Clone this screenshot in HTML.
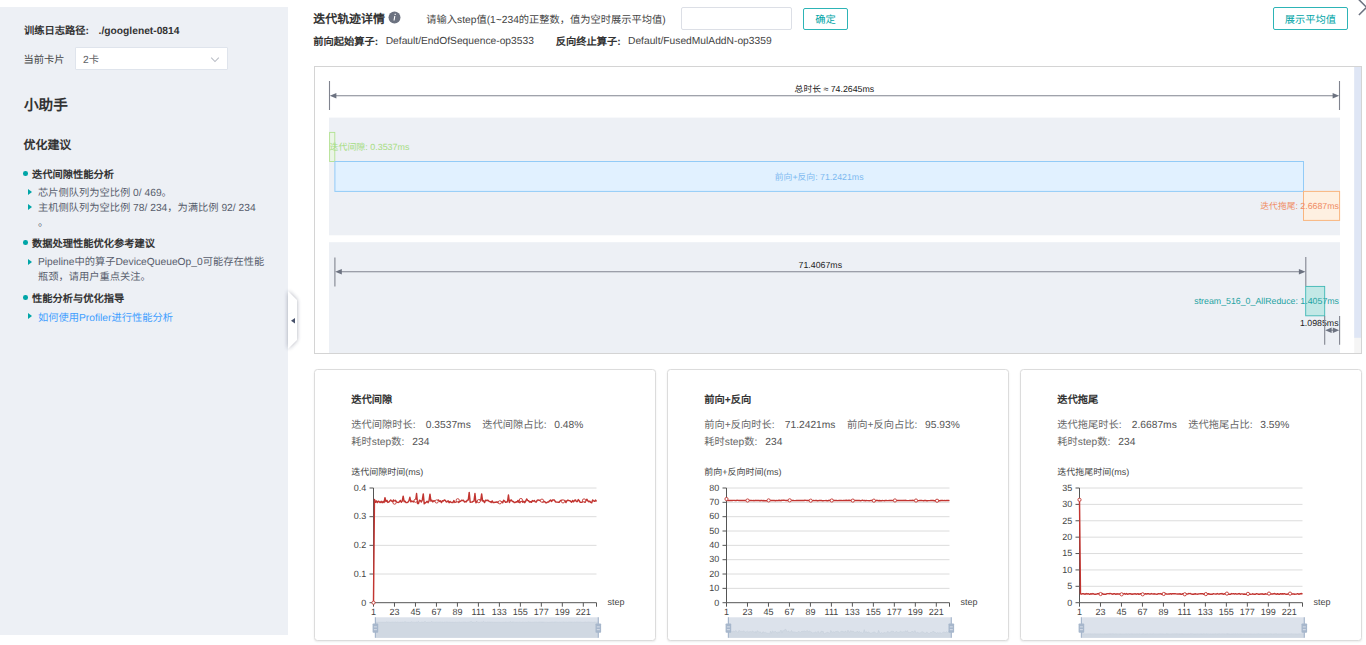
<!DOCTYPE html>
<html lang="zh-CN">
<head>
<meta charset="utf-8">
<title>Profiler</title>
<style>
html,body{margin:0;padding:0;}
body{width:1366px;height:645px;overflow:hidden;background:#fff;position:relative;font-family:"Liberation Sans", sans-serif;font-size:10.25px;color:#333;text-rendering:geometricPrecision;}
.abs{position:absolute;white-space:nowrap;}
#left{position:absolute;left:0;top:7px;width:288px;height:628px;background:#edf0f5;}
.t{position:absolute;white-space:nowrap;line-height:14px;}
.b{font-weight:bold;color:#333;}
.r{color:#575d6c;font-size:10.25px;}
.dot{position:absolute;width:4.6px;height:4.6px;border-radius:50%;background:#00a5a7;}
.tri{position:absolute;width:0;height:0;border-left:4.2px solid #00a5a7;border-top:3.2px solid transparent;border-bottom:3.2px solid transparent;}
#sel{position:absolute;left:75.2px;top:40.2px;width:152.6px;height:23.2px;background:#fff;border:1px solid #dfe4ec;box-sizing:border-box;border-radius:1px;}
.card{position:absolute;top:368.5px;width:342px;height:272.6px;border:1px solid #dcdcdc;border-radius:3.5px;box-sizing:border-box;background:#fff;box-shadow:0 1px 2px rgba(0,0,0,0.08);}
.card .ctitle{position:absolute;left:36.3px;top:24.5px;font-weight:bold;font-size:10.25px;line-height:14px;color:#333;white-space:nowrap;}
.card .cline{position:absolute;left:36.3px;font-size:10.25px;line-height:14px;color:#666;white-space:nowrap;}
.card .l1{top:49.9px;}
.card .l2{top:66.1px;}
.card .lab{margin-right:6.9px;}
.card .val{margin-right:11.5px;color:#555;}
.card .charttitle{position:absolute;left:36.3px;top:96.8px;font-size:9px;line-height:12px;color:#444;white-space:nowrap;}
.card svg.chart{position:absolute;left:-1px;top:-0.5px;}
svg text.ax{font-family:"Liberation Sans", sans-serif;font-size:9px;fill:#444;}
#tl{position:absolute;left:314px;top:66px;width:1048px;height:288px;border:1px solid #d4d4d4;box-sizing:border-box;overflow:hidden;background:#fff;}
svg text{font-family:"Liberation Sans", sans-serif;}
.btn{position:absolute;box-sizing:border-box;border:1px solid #2db4b6;border-radius:2px;color:#00a5a7;text-align:center;font-size:10.25px;background:#fff;}
</style>
</head>
<body>
<div id="left">
  <div class="t b" style="left:24px;top:17.5px;font-size:10.25px;">训练日志路径:</div>
  <div class="t b" style="left:98.6px;top:17.5px;font-size:10.25px;">./googlenet-0814</div>
  <div class="t r" style="left:23.5px;top:46.9px;font-size:10.25px;color:#444;">当前卡片</div>
  <div id="sel">
    <div class="t" style="left:6.8px;top:6px;font-size:10.25px;color:#606266;">2卡</div>
    <svg class="abs" style="left:134.2px;top:7.4px" width="10" height="8" viewBox="0 0 10 8"><path d="M1.2 1.6 L5 5.6 L8.8 1.6" fill="none" stroke="#b9bdc6" stroke-width="1.05"/></svg>
  </div>
  <div class="t b" style="left:24px;top:87.7px;font-size:14.6px;line-height:22px;">小助手</div>
  <div class="t b" style="left:23.5px;top:130px;font-size:11.95px;line-height:16px;">优化建议</div>

  <div class="dot" style="left:23px;top:164px;"></div>
  <div class="t b" style="left:32px;top:161.5px;font-size:10.25px;">迭代间隙性能分析</div>
  <div class="tri" style="left:27.5px;top:182.2px;"></div>
  <div class="t r" style="left:38px;top:180.2px;">芯片侧队列为空比例 0/ 469。</div>
  <div class="tri" style="left:27.5px;top:197px;"></div>
  <div class="t r" style="left:38px;top:195px;">主机侧队列为空比例 78/ 234，为满比例 92/ 234</div>
  <div class="t r" style="left:38px;top:210px;">。</div>

  <div class="dot" style="left:23px;top:233.4px;"></div>
  <div class="t b" style="left:32px;top:231.3px;font-size:10.25px;">数据处理性能优化参考建议</div>
  <div class="tri" style="left:27.5px;top:251.7px;"></div>
  <div class="t r" style="left:38px;top:248.7px;">Pipeline中的算子DeviceQueueOp_0可能存在性能</div>
  <div class="t r" style="left:38px;top:264px;">瓶颈，请用户重点关注。</div>

  <div class="dot" style="left:23px;top:288.3px;"></div>
  <div class="t b" style="left:32px;top:286.2px;font-size:10.25px;">性能分析与优化指导</div>
  <div class="tri" style="left:27.5px;top:306.3px;"></div>
  <div class="t" style="left:38px;top:304.6px;color:#409eff;font-size:10.25px;">如何使用Profiler进行性能分析</div>
</div>

<!-- collapse handle -->
<svg class="abs" style="left:280px;top:284px" width="26" height="72" viewBox="0 0 26 72">
  <defs><filter id="sh" x="-50%" y="-20%" width="250%" height="140%"><feGaussianBlur stdDeviation="2.1"/></filter></defs>
  <path d="M8 7 L17 16 L17 56 L8 65 Z" fill="#1a2340" opacity="0.36" filter="url(#sh)"/>
  <path d="M8 7 L17 16 L17 56 L8 65 Z" fill="#fff"/>
  <path d="M15 34 L11 36.8 L15 39.6 Z" fill="#47516b"/>
</svg>

<!-- header -->
<div class="t b" style="left:313.3px;top:11.4px;font-size:11.95px;line-height:16px;">迭代轨迹详情</div>
<svg class="abs" style="left:388px;top:11.3px" width="13" height="13" viewBox="0 0 13 13"><circle cx="6.5" cy="6.5" r="6" fill="#6c7280"/><path d="M6.25 4.9 L7.35 4.9 L6.6 9.5 L5.5 9.5 Z M6.75 2.7 L7.85 2.7 L7.65 3.9 L6.55 3.9 Z" fill="#fff"/></svg>
<div class="t" style="left:426.3px;top:14.4px;color:#444;">请输入step值(1~234的正整数，值为空时展示平均值)</div>
<div class="abs" style="left:681px;top:7px;width:111px;height:23px;box-sizing:border-box;border:1px solid #dcdfe6;border-radius:2px;background:#fff;"></div>
<div class="btn" style="left:803px;top:8px;width:45px;height:22px;line-height:24.6px;">确定</div>
<div class="btn" style="left:1272.8px;top:7px;width:75px;height:22.5px;line-height:25px;">展示平均值</div>
<svg class="abs" style="left:1356px;top:0" width="10" height="16" viewBox="0 0 10 16"><path d="M2.9 -0.4 L10.6 7.3 L2.9 15" fill="none" stroke="#6c7280" stroke-width="1.5"/></svg>

<div class="t b" style="left:313.3px;top:36.4px;font-size:10.25px;">前向起始算子:</div>
<div class="t" style="left:385.7px;top:35.4px;color:#444;font-size:10.25px;">Default/EndOfSequence-op3533</div>
<div class="t b" style="left:555.8px;top:36.4px;font-size:10.25px;">反向终止算子:</div>
<div class="t" style="left:628px;top:35.4px;color:#444;font-size:10.25px;">Default/FusedMulAddN-op3359</div>

<!-- timeline -->
<div id="tl">
<svg class="abs" style="left:-1px;top:-1px" width="1049" height="288" viewBox="314 66 1049 288">
  <defs>
    <marker id="a" markerWidth="10" markerHeight="8" refX="0" refY="0" orient="auto"></marker>
  </defs>
  <rect x="329" y="117.6" width="1011" height="117.7" fill="#edf0f5"/>
  <rect x="329" y="242.2" width="1011" height="120" fill="#edf0f5"/>
  <!-- scrollbar -->
  <rect x="1354.2" y="66" width="7.5" height="288" fill="#f5f5f5"/>
  <rect x="1354.2" y="66" width="7.5" height="271.8" fill="#dfe6f5"/>
  <!-- total arrow -->
  <g stroke="#80848f" stroke-width="1.1" fill="#6c7280">
    <line x1="329.5" y1="81" x2="329.5" y2="110"/>
    <line x1="1339.5" y1="81" x2="1339.5" y2="110"/>
    <line x1="333" y1="95.8" x2="1336" y2="95.8"/>
    <path d="M329.8 95.8 L336.4 93 L336.4 98.6 Z" stroke="none"/>
    <path d="M1339.2 95.8 L1332.6 93 L1332.6 98.6 Z" stroke="none"/>
  </g>
  <text x="834.4" y="91.6" text-anchor="middle" font-size="8.8" fill="#222">总时长 ≈ 74.2645ms</text>
  <!-- green -->
  <rect x="329.6" y="132.4" width="5.2" height="29.1" fill="#e9f8dd" fill-opacity="0.6" stroke="#b2e291" stroke-width="0.9"/>
  <text x="329.5" y="150.2" font-size="8.95" fill="#a6dd82">迭代间隙: 0.3537ms</text>
  <!-- blue -->
  <rect x="334.9" y="161.5" width="968.6" height="29.9" fill="#e1f1ff" stroke="#92cbf7" stroke-width="1"/>
  <text x="819.2" y="179.7" text-anchor="middle" font-size="8.8" fill="#7db9f0">前向+反向: 71.2421ms</text>
  <!-- orange -->
  <rect x="1303.5" y="191.4" width="36.1" height="29" fill="#fef0e1" stroke="#f9b57e" stroke-width="1"/>
  <text x="1339" y="208.8" text-anchor="end" font-size="8.8" fill="#f08c63">迭代拖尾: 2.6687ms</text>
  <!-- second -->
  <g stroke="#80848f" stroke-width="1.1" fill="#6c7280">
    <line x1="334.9" y1="257.5" x2="334.9" y2="286.5"/>
    <line x1="1305.8" y1="257" x2="1305.8" y2="286.2"/>
    <line x1="338" y1="271.8" x2="1302" y2="271.8"/>
    <path d="M335.2 271.8 L341.8 269 L341.8 274.6 Z" stroke="none"/>
    <path d="M1305.5 271.8 L1298.9 269 L1298.9 274.6 Z" stroke="none"/>
  </g>
  <text x="820.3" y="267.5" text-anchor="middle" font-size="8.8" fill="#222">71.4067ms</text>
  <rect x="1305.7" y="286.4" width="19" height="29.4" fill="#c2e8e6" stroke="#3fb8b5" stroke-width="0.9"/>
  <text x="1339" y="304.2" text-anchor="end" font-size="8.8" fill="#1fa3a3">stream_516_0_AllReduce: 1.4057ms</text>
  <text x="1338.6" y="325.9" text-anchor="end" font-size="8.8" fill="#222">1.0985ms</text>
  <g stroke="#80848f" stroke-width="1.1" fill="#6c7280">
    <line x1="1324.7" y1="316" x2="1324.7" y2="344.8"/>
    <line x1="1339.6" y1="316" x2="1339.6" y2="344.8"/>
    <line x1="1329" y1="330.2" x2="1335.5" y2="330.2"/>
    <path d="M1325.2 330.2 L1331.6 327.5 L1331.6 332.9 Z" stroke="none"/>
    <path d="M1339.2 330.2 L1332.8 327.5 L1332.8 332.9 Z" stroke="none"/>
  </g>
</svg>
</div>

<div class="card" style="left:314px">
  <div class="ctitle">迭代间隙</div>
  <div class="cline l1"><span class="lab" style="margin-right:10.1px">迭代间隙时长:</span><span class="val" style="margin-right:11.6px">0.3537ms</span><span class="lab" style="margin-right:7.6px">迭代间隙占比:</span><span class="val">0.48%</span></div>
  <div class="cline l2"><span class="lab" style="margin-right:8px">耗时step数:</span><span class="val">234</span></div>
  <div class="charttitle">迭代间隙时间(ms)</div>
  <svg class="chart" width="341" height="272" viewBox="0 0 341 272"><line x1="59.5" y1="205.02" x2="282.5" y2="205.02" stroke="#dcdcdc" stroke-width="1"/><line x1="59.5" y1="176.35" x2="282.5" y2="176.35" stroke="#dcdcdc" stroke-width="1"/><line x1="59.5" y1="147.68" x2="282.5" y2="147.68" stroke="#dcdcdc" stroke-width="1"/><line x1="59.5" y1="119.00" x2="282.5" y2="119.00" stroke="#dcdcdc" stroke-width="1"/><line x1="59.5" y1="119.0" x2="59.5" y2="233.7" stroke="#555" stroke-width="1"/><line x1="59.5" y1="233.7" x2="282.5" y2="233.7" stroke="#555" stroke-width="1"/><line x1="55.5" y1="233.70" x2="59.5" y2="233.70" stroke="#555" stroke-width="1"/><text x="52.2" y="236.50" text-anchor="end" class="ax">0</text><line x1="55.5" y1="205.02" x2="59.5" y2="205.02" stroke="#555" stroke-width="1"/><text x="52.2" y="207.82" text-anchor="end" class="ax">0.1</text><line x1="55.5" y1="176.35" x2="59.5" y2="176.35" stroke="#555" stroke-width="1"/><text x="52.2" y="179.15" text-anchor="end" class="ax">0.2</text><line x1="55.5" y1="147.68" x2="59.5" y2="147.68" stroke="#555" stroke-width="1"/><text x="52.2" y="150.48" text-anchor="end" class="ax">0.3</text><line x1="55.5" y1="119.00" x2="59.5" y2="119.00" stroke="#555" stroke-width="1"/><text x="52.2" y="121.80" text-anchor="end" class="ax">0.4</text><line x1="59.50" y1="233.7" x2="59.50" y2="237.7" stroke="#555" stroke-width="1"/><text x="59.50" y="246.10" text-anchor="middle" class="ax">1</text><line x1="80.48" y1="233.7" x2="80.48" y2="237.7" stroke="#555" stroke-width="1"/><text x="80.48" y="246.10" text-anchor="middle" class="ax">23</text><line x1="101.46" y1="233.7" x2="101.46" y2="237.7" stroke="#555" stroke-width="1"/><text x="101.46" y="246.10" text-anchor="middle" class="ax">45</text><line x1="122.44" y1="233.7" x2="122.44" y2="237.7" stroke="#555" stroke-width="1"/><text x="122.44" y="246.10" text-anchor="middle" class="ax">67</text><line x1="143.42" y1="233.7" x2="143.42" y2="237.7" stroke="#555" stroke-width="1"/><text x="143.42" y="246.10" text-anchor="middle" class="ax">89</text><line x1="164.40" y1="233.7" x2="164.40" y2="237.7" stroke="#555" stroke-width="1"/><text x="164.40" y="246.10" text-anchor="middle" class="ax">111</text><line x1="185.38" y1="233.7" x2="185.38" y2="237.7" stroke="#555" stroke-width="1"/><text x="185.38" y="246.10" text-anchor="middle" class="ax">133</text><line x1="206.36" y1="233.7" x2="206.36" y2="237.7" stroke="#555" stroke-width="1"/><text x="206.36" y="246.10" text-anchor="middle" class="ax">155</text><line x1="227.34" y1="233.7" x2="227.34" y2="237.7" stroke="#555" stroke-width="1"/><text x="227.34" y="246.10" text-anchor="middle" class="ax">177</text><line x1="248.32" y1="233.7" x2="248.32" y2="237.7" stroke="#555" stroke-width="1"/><text x="248.32" y="246.10" text-anchor="middle" class="ax">199</text><line x1="269.30" y1="233.7" x2="269.30" y2="237.7" stroke="#555" stroke-width="1"/><text x="269.30" y="246.10" text-anchor="middle" class="ax">221</text><line x1="282.5" y1="233.7" x2="282.5" y2="237.7" stroke="#555" stroke-width="1"/><text x="293.5" y="236.30" class="ax">step</text><path d="M59.50 233.70 L60.46 130.47 L61.41 133.34 L62.37 131.90 L63.33 133.56 L64.29 132.23 L65.24 132.72 L66.20 133.60 L67.16 132.31 L68.11 133.66 L69.07 132.52 L70.03 133.57 L70.98 128.61 L71.94 132.55 L72.90 131.40 L73.86 133.41 L74.81 133.13 L75.77 131.97 L76.73 131.05 L77.68 132.11 L78.64 132.63 L79.60 130.97 L80.56 133.63 L81.51 131.31 L82.47 132.94 L83.43 133.35 L84.38 133.43 L85.34 132.88 L86.30 131.43 L87.26 133.25 L88.21 132.10 L89.17 127.17 L90.13 132.70 L91.08 132.20 L92.04 133.59 L93.00 133.60 L93.95 133.18 L94.91 131.82 L95.87 128.32 L96.83 132.87 L97.78 132.09 L98.74 132.47 L99.70 132.91 L100.65 131.49 L101.61 131.76 L102.57 124.59 L103.53 134.41 L104.48 134.56 L105.44 131.26 L106.40 131.68 L107.35 132.94 L108.31 130.96 L109.27 124.88 L110.23 134.86 L111.18 133.89 L112.14 133.33 L113.10 132.37 L114.05 133.66 L115.01 131.85 L115.97 125.17 L116.92 132.12 L117.88 131.26 L118.84 132.87 L119.80 131.77 L120.75 132.06 L121.71 132.10 L122.67 132.46 L123.62 131.36 L124.58 131.06 L125.54 132.41 L126.50 131.86 L127.45 133.59 L128.41 131.76 L129.37 131.91 L130.32 130.92 L131.28 131.41 L132.24 132.95 L133.20 132.66 L134.15 131.85 L135.11 133.70 L136.07 132.44 L137.02 133.29 L137.98 133.43 L138.94 133.60 L139.89 131.56 L140.85 133.40 L141.81 133.06 L142.77 132.65 L143.72 131.27 L144.68 133.54 L145.64 132.48 L146.59 132.19 L147.55 131.23 L148.51 131.42 L149.47 131.29 L150.42 132.97 L151.38 132.58 L152.34 132.74 L153.29 131.23 L154.25 131.02 L155.21 123.44 L156.17 133.26 L157.12 133.10 L158.08 133.10 L159.04 132.38 L159.99 132.08 L160.95 124.59 L161.91 133.76 L162.86 132.57 L163.82 132.71 L164.78 132.14 L165.74 131.03 L166.69 131.79 L167.65 124.88 L168.61 132.00 L169.56 131.83 L170.52 133.61 L171.48 131.19 L172.44 131.53 L173.39 131.26 L174.35 131.48 L175.31 132.64 L176.26 132.62 L177.22 133.47 L178.18 131.95 L179.14 133.59 L180.09 133.57 L181.05 133.17 L182.01 133.30 L182.96 132.79 L183.92 133.62 L184.88 133.77 L185.83 133.33 L186.79 133.48 L187.75 132.72 L188.71 133.69 L189.66 131.26 L190.62 132.01 L191.58 133.34 L192.53 133.04 L193.49 132.77 L194.45 126.03 L195.41 133.42 L196.36 131.33 L197.32 130.92 L198.28 132.43 L199.23 132.38 L200.19 133.52 L201.15 133.47 L202.11 132.79 L203.06 133.01 L204.02 131.39 L204.98 133.30 L205.93 133.70 L206.89 131.04 L207.85 132.25 L208.80 133.35 L209.76 132.21 L210.72 133.69 L211.68 132.25 L212.63 130.04 L213.59 131.29 L214.55 131.77 L215.50 133.02 L216.46 132.72 L217.42 133.29 L218.38 131.55 L219.33 132.24 L220.29 131.53 L221.25 132.82 L222.20 133.13 L223.16 131.44 L224.12 130.94 L225.08 131.32 L226.03 131.46 L226.99 131.42 L227.95 131.65 L228.90 133.12 L229.86 132.28 L230.82 132.75 L231.77 133.68 L232.73 133.69 L233.69 132.97 L234.65 133.02 L235.60 131.78 L236.56 131.02 L237.52 132.49 L238.47 131.08 L239.43 130.93 L240.39 131.03 L241.35 132.72 L242.30 133.14 L243.26 133.12 L244.22 133.20 L245.17 133.18 L246.13 131.98 L247.09 131.19 L248.05 131.36 L249.00 132.39 L249.96 131.90 L250.92 131.47 L251.87 133.52 L252.83 131.87 L253.79 131.16 L254.74 131.52 L255.70 131.62 L256.66 132.40 L257.62 133.26 L258.57 131.50 L259.53 132.81 L260.49 131.47 L261.44 130.98 L262.40 132.63 L263.36 132.62 L264.32 130.61 L265.27 131.69 L266.23 133.28 L267.19 133.40 L268.14 133.33 L269.10 131.17 L270.06 131.45 L271.02 133.35 L271.97 131.40 L272.93 130.33 L273.89 131.88 L274.84 132.76 L275.80 132.19 L276.76 133.39 L277.71 133.73 L278.67 130.98 L279.63 131.90 L280.59 132.26 L281.54 131.09 L282.50 132.52" fill="none" stroke="#c23531" stroke-width="1.45" stroke-linejoin="round"/><circle cx="59.50" cy="233.70" r="1.6" fill="#fff" stroke="#c23531" stroke-width="0.9"/><circle cx="80.56" cy="133.63" r="1.6" fill="#fff" stroke="#c23531" stroke-width="0.9"/><circle cx="101.61" cy="131.76" r="1.6" fill="#fff" stroke="#c23531" stroke-width="0.9"/><circle cx="122.67" cy="132.46" r="1.6" fill="#fff" stroke="#c23531" stroke-width="0.9"/><circle cx="143.72" cy="131.27" r="1.6" fill="#fff" stroke="#c23531" stroke-width="0.9"/><circle cx="164.78" cy="132.14" r="1.6" fill="#fff" stroke="#c23531" stroke-width="0.9"/><circle cx="185.83" cy="133.33" r="1.6" fill="#fff" stroke="#c23531" stroke-width="0.9"/><circle cx="206.89" cy="131.04" r="1.6" fill="#fff" stroke="#c23531" stroke-width="0.9"/><circle cx="227.95" cy="131.65" r="1.6" fill="#fff" stroke="#c23531" stroke-width="0.9"/><circle cx="249.00" cy="132.39" r="1.6" fill="#fff" stroke="#c23531" stroke-width="0.9"/><circle cx="270.06" cy="131.45" r="1.6" fill="#fff" stroke="#c23531" stroke-width="0.9"/><rect x="61.4" y="248.3" width="222.9" height="20.5" fill="#dce2eb"/><path d="M61.40 268.80 L61.40 264.96 L62.36 252.96 L63.31 253.29 L64.27 253.13 L65.23 253.32 L66.18 253.16 L67.14 253.22 L68.10 253.32 L69.05 253.17 L70.01 253.33 L70.97 253.20 L71.92 253.32 L72.88 252.74 L73.84 253.20 L74.79 253.07 L75.75 253.30 L76.71 253.27 L77.66 253.13 L78.62 253.03 L79.58 253.15 L80.53 253.21 L81.49 253.02 L82.45 253.33 L83.40 253.06 L84.36 253.25 L85.32 253.30 L86.27 253.30 L87.23 253.24 L88.19 253.07 L89.14 253.28 L90.10 253.15 L91.06 252.58 L92.01 253.22 L92.97 253.16 L93.93 253.32 L94.88 253.32 L95.84 253.27 L96.80 253.12 L97.75 252.71 L98.71 253.24 L99.67 253.15 L100.62 253.19 L101.58 253.24 L102.54 253.08 L103.49 253.11 L104.45 252.28 L105.41 253.42 L106.36 253.43 L107.32 253.05 L108.28 253.10 L109.23 253.25 L110.19 253.02 L111.15 252.31 L112.10 253.47 L113.06 253.36 L114.02 253.29 L114.97 253.18 L115.93 253.33 L116.89 253.12 L117.84 252.34 L118.80 253.15 L119.76 253.05 L120.71 253.24 L121.67 253.11 L122.63 253.15 L123.58 253.15 L124.54 253.19 L125.50 253.06 L126.45 253.03 L127.41 253.19 L128.37 253.12 L129.32 253.32 L130.28 253.11 L131.24 253.13 L132.19 253.01 L133.15 253.07 L134.11 253.25 L135.06 253.21 L136.02 253.12 L136.98 253.34 L137.93 253.19 L138.89 253.29 L139.85 253.30 L140.80 253.32 L141.76 253.09 L142.72 253.30 L143.67 253.26 L144.63 253.21 L145.59 253.05 L146.54 253.32 L147.50 253.19 L148.46 253.16 L149.41 253.05 L150.37 253.07 L151.33 253.06 L152.28 253.25 L153.24 253.20 L154.20 253.22 L155.15 253.05 L156.11 253.02 L157.07 252.14 L158.02 253.28 L158.98 253.27 L159.94 253.27 L160.89 253.18 L161.85 253.15 L162.81 252.28 L163.76 253.34 L164.72 253.20 L165.68 253.22 L166.63 253.15 L167.59 253.03 L168.55 253.11 L169.50 252.31 L170.46 253.14 L171.42 253.12 L172.37 253.33 L173.33 253.04 L174.28 253.08 L175.24 253.05 L176.20 253.08 L177.15 253.21 L178.11 253.21 L179.07 253.31 L180.02 253.13 L180.98 253.32 L181.94 253.32 L182.89 253.27 L183.85 253.29 L184.81 253.23 L185.76 253.33 L186.72 253.34 L187.68 253.29 L188.63 253.31 L189.59 253.22 L190.55 253.33 L191.50 253.05 L192.46 253.14 L193.42 253.29 L194.37 253.26 L195.33 253.23 L196.29 252.44 L197.24 253.30 L198.20 253.06 L199.16 253.01 L200.11 253.19 L201.07 253.18 L202.03 253.31 L202.98 253.31 L203.94 253.23 L204.90 253.26 L205.85 253.07 L206.81 253.29 L207.77 253.34 L208.72 253.03 L209.68 253.17 L210.64 253.29 L211.59 253.16 L212.55 253.33 L213.51 253.17 L214.46 252.91 L215.42 253.06 L216.38 253.11 L217.33 253.26 L218.29 253.22 L219.25 253.29 L220.20 253.09 L221.16 253.17 L222.12 253.08 L223.07 253.23 L224.03 253.27 L224.99 253.07 L225.94 253.02 L226.90 253.06 L227.86 253.07 L228.81 253.07 L229.77 253.10 L230.73 253.27 L231.68 253.17 L232.64 253.22 L233.60 253.33 L234.55 253.33 L235.51 253.25 L236.47 253.26 L237.42 253.11 L238.38 253.02 L239.34 253.19 L240.29 253.03 L241.25 253.01 L242.21 253.03 L243.16 253.22 L244.12 253.27 L245.08 253.27 L246.03 253.28 L246.99 253.28 L247.95 253.14 L248.90 253.04 L249.86 253.06 L250.82 253.18 L251.77 253.13 L252.73 253.08 L253.69 253.32 L254.64 253.12 L255.60 253.04 L256.56 253.08 L257.51 253.09 L258.47 253.18 L259.43 253.28 L260.38 253.08 L261.34 253.23 L262.30 253.08 L263.25 253.02 L264.21 253.21 L265.17 253.21 L266.12 252.98 L267.08 253.10 L268.04 253.29 L268.99 253.30 L269.95 253.29 L270.91 253.04 L271.86 253.07 L272.82 253.29 L273.78 253.07 L274.73 252.94 L275.69 253.12 L276.65 253.23 L277.60 253.16 L278.56 253.30 L279.52 253.34 L280.47 253.02 L281.43 253.13 L282.39 253.17 L283.34 253.03 L284.30 253.20 L284.30 268.80Z" fill="#d0d8e2"/><path d="M61.40 264.96 L62.36 252.96 L63.31 253.29 L64.27 253.13 L65.23 253.32 L66.18 253.16 L67.14 253.22 L68.10 253.32 L69.05 253.17 L70.01 253.33 L70.97 253.20 L71.92 253.32 L72.88 252.74 L73.84 253.20 L74.79 253.07 L75.75 253.30 L76.71 253.27 L77.66 253.13 L78.62 253.03 L79.58 253.15 L80.53 253.21 L81.49 253.02 L82.45 253.33 L83.40 253.06 L84.36 253.25 L85.32 253.30 L86.27 253.30 L87.23 253.24 L88.19 253.07 L89.14 253.28 L90.10 253.15 L91.06 252.58 L92.01 253.22 L92.97 253.16 L93.93 253.32 L94.88 253.32 L95.84 253.27 L96.80 253.12 L97.75 252.71 L98.71 253.24 L99.67 253.15 L100.62 253.19 L101.58 253.24 L102.54 253.08 L103.49 253.11 L104.45 252.28 L105.41 253.42 L106.36 253.43 L107.32 253.05 L108.28 253.10 L109.23 253.25 L110.19 253.02 L111.15 252.31 L112.10 253.47 L113.06 253.36 L114.02 253.29 L114.97 253.18 L115.93 253.33 L116.89 253.12 L117.84 252.34 L118.80 253.15 L119.76 253.05 L120.71 253.24 L121.67 253.11 L122.63 253.15 L123.58 253.15 L124.54 253.19 L125.50 253.06 L126.45 253.03 L127.41 253.19 L128.37 253.12 L129.32 253.32 L130.28 253.11 L131.24 253.13 L132.19 253.01 L133.15 253.07 L134.11 253.25 L135.06 253.21 L136.02 253.12 L136.98 253.34 L137.93 253.19 L138.89 253.29 L139.85 253.30 L140.80 253.32 L141.76 253.09 L142.72 253.30 L143.67 253.26 L144.63 253.21 L145.59 253.05 L146.54 253.32 L147.50 253.19 L148.46 253.16 L149.41 253.05 L150.37 253.07 L151.33 253.06 L152.28 253.25 L153.24 253.20 L154.20 253.22 L155.15 253.05 L156.11 253.02 L157.07 252.14 L158.02 253.28 L158.98 253.27 L159.94 253.27 L160.89 253.18 L161.85 253.15 L162.81 252.28 L163.76 253.34 L164.72 253.20 L165.68 253.22 L166.63 253.15 L167.59 253.03 L168.55 253.11 L169.50 252.31 L170.46 253.14 L171.42 253.12 L172.37 253.33 L173.33 253.04 L174.28 253.08 L175.24 253.05 L176.20 253.08 L177.15 253.21 L178.11 253.21 L179.07 253.31 L180.02 253.13 L180.98 253.32 L181.94 253.32 L182.89 253.27 L183.85 253.29 L184.81 253.23 L185.76 253.33 L186.72 253.34 L187.68 253.29 L188.63 253.31 L189.59 253.22 L190.55 253.33 L191.50 253.05 L192.46 253.14 L193.42 253.29 L194.37 253.26 L195.33 253.23 L196.29 252.44 L197.24 253.30 L198.20 253.06 L199.16 253.01 L200.11 253.19 L201.07 253.18 L202.03 253.31 L202.98 253.31 L203.94 253.23 L204.90 253.26 L205.85 253.07 L206.81 253.29 L207.77 253.34 L208.72 253.03 L209.68 253.17 L210.64 253.29 L211.59 253.16 L212.55 253.33 L213.51 253.17 L214.46 252.91 L215.42 253.06 L216.38 253.11 L217.33 253.26 L218.29 253.22 L219.25 253.29 L220.20 253.09 L221.16 253.17 L222.12 253.08 L223.07 253.23 L224.03 253.27 L224.99 253.07 L225.94 253.02 L226.90 253.06 L227.86 253.07 L228.81 253.07 L229.77 253.10 L230.73 253.27 L231.68 253.17 L232.64 253.22 L233.60 253.33 L234.55 253.33 L235.51 253.25 L236.47 253.26 L237.42 253.11 L238.38 253.02 L239.34 253.19 L240.29 253.03 L241.25 253.01 L242.21 253.03 L243.16 253.22 L244.12 253.27 L245.08 253.27 L246.03 253.28 L246.99 253.28 L247.95 253.14 L248.90 253.04 L249.86 253.06 L250.82 253.18 L251.77 253.13 L252.73 253.08 L253.69 253.32 L254.64 253.12 L255.60 253.04 L256.56 253.08 L257.51 253.09 L258.47 253.18 L259.43 253.28 L260.38 253.08 L261.34 253.23 L262.30 253.08 L263.25 253.02 L264.21 253.21 L265.17 253.21 L266.12 252.98 L267.08 253.10 L268.04 253.29 L268.99 253.30 L269.95 253.29 L270.91 253.04 L271.86 253.07 L272.82 253.29 L273.78 253.07 L274.73 252.94 L275.69 253.12 L276.65 253.23 L277.60 253.16 L278.56 253.30 L279.52 253.34 L280.47 253.02 L281.43 253.13 L282.39 253.17 L283.34 253.03 L284.30 253.20" fill="none" stroke="#c3ccd9" stroke-width="0.5"/><line x1="61.4" y1="248.3" x2="61.4" y2="268.8" stroke="#a7b7cc" stroke-width="1.2"/><rect x="58.6" y="254.5" width="5.6" height="9.3" rx="0.8" fill="#a7b7cc"/><line x1="59.9" y1="257.90000000000003" x2="62.9" y2="257.90000000000003" stroke="#e4e9f0" stroke-width="0.8"/><line x1="59.9" y1="260.7" x2="62.9" y2="260.7" stroke="#e4e9f0" stroke-width="0.8"/><line x1="284.3" y1="248.3" x2="284.3" y2="268.8" stroke="#a7b7cc" stroke-width="1.2"/><rect x="281.5" y="254.5" width="5.6" height="9.3" rx="0.8" fill="#a7b7cc"/><line x1="282.8" y1="257.90000000000003" x2="285.8" y2="257.90000000000003" stroke="#e4e9f0" stroke-width="0.8"/><line x1="282.8" y1="260.7" x2="285.8" y2="260.7" stroke="#e4e9f0" stroke-width="0.8"/></svg>
</div>
<div class="card" style="left:667px">
  <div class="ctitle">前向+反向</div>
  <div class="cline l1"><span class="lab" style="margin-right:10.1px">前向+反向时长:</span><span class="val" style="margin-right:11.6px">71.2421ms</span><span class="lab" style="margin-right:7.6px">前向+反向占比:</span><span class="val">95.93%</span></div>
  <div class="cline l2"><span class="lab" style="margin-right:8px">耗时step数:</span><span class="val">234</span></div>
  <div class="charttitle">前向+反向时间(ms)</div>
  <svg class="chart" width="341" height="272" viewBox="0 0 341 272"><line x1="59.5" y1="219.36" x2="282.5" y2="219.36" stroke="#dcdcdc" stroke-width="1"/><line x1="59.5" y1="205.02" x2="282.5" y2="205.02" stroke="#dcdcdc" stroke-width="1"/><line x1="59.5" y1="190.69" x2="282.5" y2="190.69" stroke="#dcdcdc" stroke-width="1"/><line x1="59.5" y1="176.35" x2="282.5" y2="176.35" stroke="#dcdcdc" stroke-width="1"/><line x1="59.5" y1="162.01" x2="282.5" y2="162.01" stroke="#dcdcdc" stroke-width="1"/><line x1="59.5" y1="147.68" x2="282.5" y2="147.68" stroke="#dcdcdc" stroke-width="1"/><line x1="59.5" y1="133.34" x2="282.5" y2="133.34" stroke="#dcdcdc" stroke-width="1"/><line x1="59.5" y1="119.00" x2="282.5" y2="119.00" stroke="#dcdcdc" stroke-width="1"/><line x1="59.5" y1="119.0" x2="59.5" y2="233.7" stroke="#555" stroke-width="1"/><line x1="59.5" y1="233.7" x2="282.5" y2="233.7" stroke="#555" stroke-width="1"/><line x1="55.5" y1="233.70" x2="59.5" y2="233.70" stroke="#555" stroke-width="1"/><text x="52.2" y="236.50" text-anchor="end" class="ax">0</text><line x1="55.5" y1="219.36" x2="59.5" y2="219.36" stroke="#555" stroke-width="1"/><text x="52.2" y="222.16" text-anchor="end" class="ax">10</text><line x1="55.5" y1="205.02" x2="59.5" y2="205.02" stroke="#555" stroke-width="1"/><text x="52.2" y="207.82" text-anchor="end" class="ax">20</text><line x1="55.5" y1="190.69" x2="59.5" y2="190.69" stroke="#555" stroke-width="1"/><text x="52.2" y="193.49" text-anchor="end" class="ax">30</text><line x1="55.5" y1="176.35" x2="59.5" y2="176.35" stroke="#555" stroke-width="1"/><text x="52.2" y="179.15" text-anchor="end" class="ax">40</text><line x1="55.5" y1="162.01" x2="59.5" y2="162.01" stroke="#555" stroke-width="1"/><text x="52.2" y="164.81" text-anchor="end" class="ax">50</text><line x1="55.5" y1="147.68" x2="59.5" y2="147.68" stroke="#555" stroke-width="1"/><text x="52.2" y="150.48" text-anchor="end" class="ax">60</text><line x1="55.5" y1="133.34" x2="59.5" y2="133.34" stroke="#555" stroke-width="1"/><text x="52.2" y="136.14" text-anchor="end" class="ax">70</text><line x1="55.5" y1="119.00" x2="59.5" y2="119.00" stroke="#555" stroke-width="1"/><text x="52.2" y="121.80" text-anchor="end" class="ax">80</text><line x1="59.50" y1="233.7" x2="59.50" y2="237.7" stroke="#555" stroke-width="1"/><text x="59.50" y="246.10" text-anchor="middle" class="ax">1</text><line x1="80.48" y1="233.7" x2="80.48" y2="237.7" stroke="#555" stroke-width="1"/><text x="80.48" y="246.10" text-anchor="middle" class="ax">23</text><line x1="101.46" y1="233.7" x2="101.46" y2="237.7" stroke="#555" stroke-width="1"/><text x="101.46" y="246.10" text-anchor="middle" class="ax">45</text><line x1="122.44" y1="233.7" x2="122.44" y2="237.7" stroke="#555" stroke-width="1"/><text x="122.44" y="246.10" text-anchor="middle" class="ax">67</text><line x1="143.42" y1="233.7" x2="143.42" y2="237.7" stroke="#555" stroke-width="1"/><text x="143.42" y="246.10" text-anchor="middle" class="ax">89</text><line x1="164.40" y1="233.7" x2="164.40" y2="237.7" stroke="#555" stroke-width="1"/><text x="164.40" y="246.10" text-anchor="middle" class="ax">111</text><line x1="185.38" y1="233.7" x2="185.38" y2="237.7" stroke="#555" stroke-width="1"/><text x="185.38" y="246.10" text-anchor="middle" class="ax">133</text><line x1="206.36" y1="233.7" x2="206.36" y2="237.7" stroke="#555" stroke-width="1"/><text x="206.36" y="246.10" text-anchor="middle" class="ax">155</text><line x1="227.34" y1="233.7" x2="227.34" y2="237.7" stroke="#555" stroke-width="1"/><text x="227.34" y="246.10" text-anchor="middle" class="ax">177</text><line x1="248.32" y1="233.7" x2="248.32" y2="237.7" stroke="#555" stroke-width="1"/><text x="248.32" y="246.10" text-anchor="middle" class="ax">199</text><line x1="269.30" y1="233.7" x2="269.30" y2="237.7" stroke="#555" stroke-width="1"/><text x="269.30" y="246.10" text-anchor="middle" class="ax">221</text><line x1="282.5" y1="233.7" x2="282.5" y2="237.7" stroke="#555" stroke-width="1"/><text x="293.5" y="236.30" class="ax">step</text><path d="M59.50 130.04 L60.46 131.62 L61.41 131.59 L62.37 131.49 L63.33 131.53 L64.29 131.38 L65.24 131.50 L66.20 131.37 L67.16 131.36 L68.11 131.46 L69.07 131.60 L70.03 131.29 L70.98 131.37 L71.94 131.47 L72.90 131.44 L73.86 131.46 L74.81 131.38 L75.77 131.45 L76.73 131.54 L77.68 131.48 L78.64 131.41 L79.60 131.51 L80.56 131.50 L81.51 131.46 L82.47 131.51 L83.43 131.41 L84.38 131.44 L85.34 131.63 L86.30 131.44 L87.26 131.68 L88.21 131.35 L89.17 131.42 L90.13 131.56 L91.08 131.51 L92.04 131.57 L93.00 131.74 L93.95 131.51 L94.91 131.52 L95.87 131.66 L96.83 131.56 L97.78 131.68 L98.74 131.71 L99.70 131.71 L100.65 131.80 L101.61 131.41 L102.57 131.70 L103.53 131.39 L104.48 131.50 L105.44 131.50 L106.40 131.44 L107.35 131.54 L108.31 131.71 L109.27 131.48 L110.23 131.66 L111.18 131.46 L112.14 131.25 L113.10 131.68 L114.05 131.31 L115.01 131.41 L115.97 131.18 L116.92 131.15 L117.88 131.40 L118.84 131.54 L119.80 131.36 L120.75 131.58 L121.71 131.55 L122.67 131.31 L123.62 131.55 L124.58 131.52 L125.54 131.52 L126.50 131.55 L127.45 131.60 L128.41 131.60 L129.37 131.45 L130.32 131.48 L131.28 131.59 L132.24 131.50 L133.20 131.39 L134.15 131.50 L135.11 131.37 L136.07 131.42 L137.02 131.49 L137.98 131.33 L138.94 131.40 L139.89 131.49 L140.85 131.41 L141.81 131.49 L142.77 131.55 L143.72 131.68 L144.68 131.63 L145.64 131.64 L146.59 131.50 L147.55 131.63 L148.51 131.51 L149.47 131.43 L150.42 131.69 L151.38 131.66 L152.34 131.40 L153.29 131.47 L154.25 131.43 L155.21 131.79 L156.17 131.73 L157.12 131.64 L158.08 131.60 L159.04 131.53 L159.99 131.68 L160.95 131.72 L161.91 131.31 L162.86 131.51 L163.82 131.56 L164.78 131.49 L165.74 131.57 L166.69 131.46 L167.65 131.46 L168.61 131.43 L169.56 131.47 L170.52 131.65 L171.48 131.55 L172.44 131.40 L173.39 131.45 L174.35 131.43 L175.31 131.62 L176.26 131.40 L177.22 131.46 L178.18 131.59 L179.14 131.27 L180.09 131.53 L181.05 131.54 L182.01 131.32 L182.96 131.50 L183.92 131.42 L184.88 131.44 L185.83 131.60 L186.79 131.56 L187.75 131.55 L188.71 131.38 L189.66 131.58 L190.62 131.47 L191.58 131.59 L192.53 131.55 L193.49 131.66 L194.45 131.65 L195.41 131.19 L196.36 131.60 L197.32 131.46 L198.28 131.68 L199.23 131.49 L200.19 131.60 L201.15 131.63 L202.11 131.75 L203.06 131.65 L204.02 131.59 L204.98 131.54 L205.93 131.54 L206.89 131.66 L207.85 131.72 L208.80 131.70 L209.76 131.30 L210.72 131.58 L211.68 131.76 L212.63 131.58 L213.59 131.70 L214.55 131.66 L215.50 131.59 L216.46 131.63 L217.42 131.73 L218.38 131.49 L219.33 131.45 L220.29 131.63 L221.25 131.64 L222.20 131.41 L223.16 131.44 L224.12 131.40 L225.08 131.50 L226.03 131.63 L226.99 131.51 L227.95 131.45 L228.90 131.61 L229.86 131.58 L230.82 131.51 L231.77 131.40 L232.73 131.53 L233.69 131.52 L234.65 131.49 L235.60 131.56 L236.56 131.35 L237.52 131.55 L238.47 131.33 L239.43 131.58 L240.39 131.60 L241.35 131.61 L242.30 131.57 L243.26 131.40 L244.22 131.54 L245.17 131.52 L246.13 131.33 L247.09 131.61 L248.05 131.67 L249.00 131.53 L249.96 131.66 L250.92 131.67 L251.87 131.62 L252.83 131.51 L253.79 131.50 L254.74 131.57 L255.70 131.65 L256.66 131.79 L257.62 131.53 L258.57 131.55 L259.53 131.73 L260.49 131.76 L261.44 131.61 L262.40 131.60 L263.36 131.58 L264.32 131.38 L265.27 131.57 L266.23 131.52 L267.19 131.70 L268.14 131.70 L269.10 131.57 L270.06 131.74 L271.02 131.58 L271.97 131.67 L272.93 131.72 L273.89 131.58 L274.84 131.52 L275.80 131.56 L276.76 131.61 L277.71 131.47 L278.67 131.66 L279.63 131.46 L280.59 131.57 L281.54 131.37 L282.50 131.62" fill="none" stroke="#c23531" stroke-width="1.45" stroke-linejoin="round"/><circle cx="59.50" cy="130.04" r="1.6" fill="#fff" stroke="#c23531" stroke-width="0.9"/><circle cx="80.56" cy="131.50" r="1.6" fill="#fff" stroke="#c23531" stroke-width="0.9"/><circle cx="101.61" cy="131.41" r="1.6" fill="#fff" stroke="#c23531" stroke-width="0.9"/><circle cx="122.67" cy="131.31" r="1.6" fill="#fff" stroke="#c23531" stroke-width="0.9"/><circle cx="143.72" cy="131.68" r="1.6" fill="#fff" stroke="#c23531" stroke-width="0.9"/><circle cx="164.78" cy="131.49" r="1.6" fill="#fff" stroke="#c23531" stroke-width="0.9"/><circle cx="185.83" cy="131.60" r="1.6" fill="#fff" stroke="#c23531" stroke-width="0.9"/><circle cx="206.89" cy="131.66" r="1.6" fill="#fff" stroke="#c23531" stroke-width="0.9"/><circle cx="227.95" cy="131.45" r="1.6" fill="#fff" stroke="#c23531" stroke-width="0.9"/><circle cx="249.00" cy="131.53" r="1.6" fill="#fff" stroke="#c23531" stroke-width="0.9"/><circle cx="270.06" cy="131.74" r="1.6" fill="#fff" stroke="#c23531" stroke-width="0.9"/><rect x="61.4" y="248.3" width="222.9" height="20.5" fill="#dce2eb"/><path d="M61.40 268.80 L61.40 252.14 L62.36 263.67 L63.31 263.42 L64.27 262.73 L65.23 263.01 L66.18 261.92 L67.14 262.80 L68.10 261.82 L69.05 261.74 L70.01 262.51 L70.97 263.55 L71.92 261.30 L72.88 261.88 L73.84 262.55 L74.79 262.38 L75.75 262.48 L76.71 261.94 L77.66 262.44 L78.62 263.07 L79.58 262.63 L80.53 262.16 L81.49 262.88 L82.45 262.81 L83.40 262.49 L84.36 262.90 L85.32 262.12 L86.27 262.34 L87.23 263.71 L88.19 262.36 L89.14 264.13 L90.10 261.69 L91.06 262.18 L92.01 263.24 L92.97 262.83 L93.93 263.28 L94.88 264.53 L95.84 262.86 L96.80 262.93 L97.75 263.94 L98.71 263.24 L99.67 264.10 L100.62 264.30 L101.58 264.34 L102.54 264.96 L103.49 262.17 L104.45 264.26 L105.41 261.96 L106.36 262.81 L107.32 262.79 L108.28 262.33 L109.23 263.07 L110.19 264.36 L111.15 262.65 L112.10 263.94 L113.06 262.48 L114.02 260.97 L114.97 264.12 L115.93 261.39 L116.89 262.12 L117.84 260.44 L118.80 260.26 L119.76 262.05 L120.71 263.09 L121.67 261.80 L122.63 263.42 L123.58 263.14 L124.54 261.38 L125.50 263.15 L126.45 262.92 L127.41 262.94 L128.37 263.17 L129.32 263.51 L130.28 263.54 L131.24 262.44 L132.19 262.63 L133.15 263.45 L134.11 262.81 L135.06 262.03 L136.02 262.78 L136.98 261.85 L137.93 262.23 L138.89 262.72 L139.85 261.52 L140.80 262.06 L141.76 262.74 L142.72 262.15 L143.67 262.69 L144.63 263.13 L145.59 264.10 L146.54 263.71 L147.50 263.81 L148.46 262.79 L149.41 263.71 L150.37 262.88 L151.33 262.31 L152.28 264.17 L153.24 263.94 L154.20 262.07 L155.15 262.57 L156.11 262.29 L157.07 264.94 L158.02 264.48 L158.98 263.83 L159.94 263.52 L160.89 263.01 L161.85 264.11 L162.81 264.42 L163.76 261.44 L164.72 262.85 L165.68 263.21 L166.63 262.75 L167.59 263.27 L168.55 262.54 L169.50 262.47 L170.46 262.25 L171.42 262.59 L172.37 263.90 L173.33 263.14 L174.28 262.08 L175.24 262.46 L176.20 262.29 L177.15 263.66 L178.11 262.06 L179.07 262.47 L180.02 263.43 L180.98 261.14 L181.94 262.99 L182.89 263.12 L183.85 261.52 L184.81 262.78 L185.76 262.18 L186.72 262.35 L187.68 263.53 L188.63 263.21 L189.59 263.16 L190.55 261.96 L191.50 263.37 L192.46 262.56 L193.42 263.48 L194.37 263.19 L195.33 264.00 L196.29 263.91 L197.24 260.57 L198.20 263.53 L199.16 262.54 L200.11 264.07 L201.07 262.73 L202.03 263.55 L202.98 263.73 L203.94 264.60 L204.90 263.85 L205.85 263.48 L206.81 263.10 L207.77 263.06 L208.72 263.98 L209.68 264.38 L210.64 264.28 L211.59 261.34 L212.55 263.38 L213.51 264.67 L214.46 263.38 L215.42 264.22 L216.38 263.95 L217.33 263.47 L218.29 263.74 L219.25 264.46 L220.20 262.74 L221.16 262.45 L222.12 263.77 L223.07 263.85 L224.03 262.17 L224.99 262.39 L225.94 262.10 L226.90 262.79 L227.86 263.76 L228.81 262.86 L229.77 262.39 L230.73 263.59 L231.68 263.38 L232.64 262.89 L233.60 262.03 L234.55 263.01 L235.51 262.92 L236.47 262.72 L237.42 263.21 L238.38 261.67 L239.34 263.13 L240.29 261.54 L241.25 263.37 L242.21 263.52 L243.16 263.58 L244.12 263.29 L245.08 262.04 L246.03 263.10 L246.99 262.95 L247.95 261.53 L248.90 263.62 L249.86 264.02 L250.82 263.05 L251.77 263.99 L252.73 264.00 L253.69 263.66 L254.64 262.89 L255.60 262.81 L256.56 263.31 L257.51 263.86 L258.47 264.90 L259.43 263.00 L260.38 263.18 L261.34 264.47 L262.30 264.68 L263.25 263.58 L264.21 263.49 L265.17 263.39 L266.12 261.93 L267.08 263.30 L268.04 262.98 L268.99 264.22 L269.95 264.27 L270.91 263.28 L271.86 264.53 L272.82 263.39 L273.78 264.06 L274.73 264.43 L275.69 263.41 L276.65 262.94 L277.60 263.22 L278.56 263.61 L279.52 262.58 L280.47 263.93 L281.43 262.49 L282.39 263.30 L283.34 261.84 L284.30 263.65 L284.30 268.80Z" fill="#d0d8e2"/><path d="M61.40 252.14 L62.36 263.67 L63.31 263.42 L64.27 262.73 L65.23 263.01 L66.18 261.92 L67.14 262.80 L68.10 261.82 L69.05 261.74 L70.01 262.51 L70.97 263.55 L71.92 261.30 L72.88 261.88 L73.84 262.55 L74.79 262.38 L75.75 262.48 L76.71 261.94 L77.66 262.44 L78.62 263.07 L79.58 262.63 L80.53 262.16 L81.49 262.88 L82.45 262.81 L83.40 262.49 L84.36 262.90 L85.32 262.12 L86.27 262.34 L87.23 263.71 L88.19 262.36 L89.14 264.13 L90.10 261.69 L91.06 262.18 L92.01 263.24 L92.97 262.83 L93.93 263.28 L94.88 264.53 L95.84 262.86 L96.80 262.93 L97.75 263.94 L98.71 263.24 L99.67 264.10 L100.62 264.30 L101.58 264.34 L102.54 264.96 L103.49 262.17 L104.45 264.26 L105.41 261.96 L106.36 262.81 L107.32 262.79 L108.28 262.33 L109.23 263.07 L110.19 264.36 L111.15 262.65 L112.10 263.94 L113.06 262.48 L114.02 260.97 L114.97 264.12 L115.93 261.39 L116.89 262.12 L117.84 260.44 L118.80 260.26 L119.76 262.05 L120.71 263.09 L121.67 261.80 L122.63 263.42 L123.58 263.14 L124.54 261.38 L125.50 263.15 L126.45 262.92 L127.41 262.94 L128.37 263.17 L129.32 263.51 L130.28 263.54 L131.24 262.44 L132.19 262.63 L133.15 263.45 L134.11 262.81 L135.06 262.03 L136.02 262.78 L136.98 261.85 L137.93 262.23 L138.89 262.72 L139.85 261.52 L140.80 262.06 L141.76 262.74 L142.72 262.15 L143.67 262.69 L144.63 263.13 L145.59 264.10 L146.54 263.71 L147.50 263.81 L148.46 262.79 L149.41 263.71 L150.37 262.88 L151.33 262.31 L152.28 264.17 L153.24 263.94 L154.20 262.07 L155.15 262.57 L156.11 262.29 L157.07 264.94 L158.02 264.48 L158.98 263.83 L159.94 263.52 L160.89 263.01 L161.85 264.11 L162.81 264.42 L163.76 261.44 L164.72 262.85 L165.68 263.21 L166.63 262.75 L167.59 263.27 L168.55 262.54 L169.50 262.47 L170.46 262.25 L171.42 262.59 L172.37 263.90 L173.33 263.14 L174.28 262.08 L175.24 262.46 L176.20 262.29 L177.15 263.66 L178.11 262.06 L179.07 262.47 L180.02 263.43 L180.98 261.14 L181.94 262.99 L182.89 263.12 L183.85 261.52 L184.81 262.78 L185.76 262.18 L186.72 262.35 L187.68 263.53 L188.63 263.21 L189.59 263.16 L190.55 261.96 L191.50 263.37 L192.46 262.56 L193.42 263.48 L194.37 263.19 L195.33 264.00 L196.29 263.91 L197.24 260.57 L198.20 263.53 L199.16 262.54 L200.11 264.07 L201.07 262.73 L202.03 263.55 L202.98 263.73 L203.94 264.60 L204.90 263.85 L205.85 263.48 L206.81 263.10 L207.77 263.06 L208.72 263.98 L209.68 264.38 L210.64 264.28 L211.59 261.34 L212.55 263.38 L213.51 264.67 L214.46 263.38 L215.42 264.22 L216.38 263.95 L217.33 263.47 L218.29 263.74 L219.25 264.46 L220.20 262.74 L221.16 262.45 L222.12 263.77 L223.07 263.85 L224.03 262.17 L224.99 262.39 L225.94 262.10 L226.90 262.79 L227.86 263.76 L228.81 262.86 L229.77 262.39 L230.73 263.59 L231.68 263.38 L232.64 262.89 L233.60 262.03 L234.55 263.01 L235.51 262.92 L236.47 262.72 L237.42 263.21 L238.38 261.67 L239.34 263.13 L240.29 261.54 L241.25 263.37 L242.21 263.52 L243.16 263.58 L244.12 263.29 L245.08 262.04 L246.03 263.10 L246.99 262.95 L247.95 261.53 L248.90 263.62 L249.86 264.02 L250.82 263.05 L251.77 263.99 L252.73 264.00 L253.69 263.66 L254.64 262.89 L255.60 262.81 L256.56 263.31 L257.51 263.86 L258.47 264.90 L259.43 263.00 L260.38 263.18 L261.34 264.47 L262.30 264.68 L263.25 263.58 L264.21 263.49 L265.17 263.39 L266.12 261.93 L267.08 263.30 L268.04 262.98 L268.99 264.22 L269.95 264.27 L270.91 263.28 L271.86 264.53 L272.82 263.39 L273.78 264.06 L274.73 264.43 L275.69 263.41 L276.65 262.94 L277.60 263.22 L278.56 263.61 L279.52 262.58 L280.47 263.93 L281.43 262.49 L282.39 263.30 L283.34 261.84 L284.30 263.65" fill="none" stroke="#c3ccd9" stroke-width="0.5"/><line x1="61.4" y1="248.3" x2="61.4" y2="268.8" stroke="#a7b7cc" stroke-width="1.2"/><rect x="58.6" y="254.5" width="5.6" height="9.3" rx="0.8" fill="#a7b7cc"/><line x1="59.9" y1="257.90000000000003" x2="62.9" y2="257.90000000000003" stroke="#e4e9f0" stroke-width="0.8"/><line x1="59.9" y1="260.7" x2="62.9" y2="260.7" stroke="#e4e9f0" stroke-width="0.8"/><line x1="284.3" y1="248.3" x2="284.3" y2="268.8" stroke="#a7b7cc" stroke-width="1.2"/><rect x="281.5" y="254.5" width="5.6" height="9.3" rx="0.8" fill="#a7b7cc"/><line x1="282.8" y1="257.90000000000003" x2="285.8" y2="257.90000000000003" stroke="#e4e9f0" stroke-width="0.8"/><line x1="282.8" y1="260.7" x2="285.8" y2="260.7" stroke="#e4e9f0" stroke-width="0.8"/></svg>
</div>
<div class="card" style="left:1020px">
  <div class="ctitle">迭代拖尾</div>
  <div class="cline l1"><span class="lab" style="margin-right:10.1px">迭代拖尾时长:</span><span class="val" style="margin-right:11.6px">2.6687ms</span><span class="lab" style="margin-right:7.6px">迭代拖尾占比:</span><span class="val">3.59%</span></div>
  <div class="cline l2"><span class="lab" style="margin-right:8px">耗时step数:</span><span class="val">234</span></div>
  <div class="charttitle">迭代拖尾时间(ms)</div>
  <svg class="chart" width="341" height="272" viewBox="0 0 341 272"><line x1="59.5" y1="217.31" x2="282.5" y2="217.31" stroke="#dcdcdc" stroke-width="1"/><line x1="59.5" y1="200.93" x2="282.5" y2="200.93" stroke="#dcdcdc" stroke-width="1"/><line x1="59.5" y1="184.54" x2="282.5" y2="184.54" stroke="#dcdcdc" stroke-width="1"/><line x1="59.5" y1="168.16" x2="282.5" y2="168.16" stroke="#dcdcdc" stroke-width="1"/><line x1="59.5" y1="151.77" x2="282.5" y2="151.77" stroke="#dcdcdc" stroke-width="1"/><line x1="59.5" y1="135.39" x2="282.5" y2="135.39" stroke="#dcdcdc" stroke-width="1"/><line x1="59.5" y1="119.00" x2="282.5" y2="119.00" stroke="#dcdcdc" stroke-width="1"/><line x1="59.5" y1="119.0" x2="59.5" y2="233.7" stroke="#555" stroke-width="1"/><line x1="59.5" y1="233.7" x2="282.5" y2="233.7" stroke="#555" stroke-width="1"/><line x1="55.5" y1="233.70" x2="59.5" y2="233.70" stroke="#555" stroke-width="1"/><text x="52.2" y="236.50" text-anchor="end" class="ax">0</text><line x1="55.5" y1="217.31" x2="59.5" y2="217.31" stroke="#555" stroke-width="1"/><text x="52.2" y="220.11" text-anchor="end" class="ax">5</text><line x1="55.5" y1="200.93" x2="59.5" y2="200.93" stroke="#555" stroke-width="1"/><text x="52.2" y="203.73" text-anchor="end" class="ax">10</text><line x1="55.5" y1="184.54" x2="59.5" y2="184.54" stroke="#555" stroke-width="1"/><text x="52.2" y="187.34" text-anchor="end" class="ax">15</text><line x1="55.5" y1="168.16" x2="59.5" y2="168.16" stroke="#555" stroke-width="1"/><text x="52.2" y="170.96" text-anchor="end" class="ax">20</text><line x1="55.5" y1="151.77" x2="59.5" y2="151.77" stroke="#555" stroke-width="1"/><text x="52.2" y="154.57" text-anchor="end" class="ax">25</text><line x1="55.5" y1="135.39" x2="59.5" y2="135.39" stroke="#555" stroke-width="1"/><text x="52.2" y="138.19" text-anchor="end" class="ax">30</text><line x1="55.5" y1="119.00" x2="59.5" y2="119.00" stroke="#555" stroke-width="1"/><text x="52.2" y="121.80" text-anchor="end" class="ax">35</text><line x1="59.50" y1="233.7" x2="59.50" y2="237.7" stroke="#555" stroke-width="1"/><text x="59.50" y="246.10" text-anchor="middle" class="ax">1</text><line x1="80.48" y1="233.7" x2="80.48" y2="237.7" stroke="#555" stroke-width="1"/><text x="80.48" y="246.10" text-anchor="middle" class="ax">23</text><line x1="101.46" y1="233.7" x2="101.46" y2="237.7" stroke="#555" stroke-width="1"/><text x="101.46" y="246.10" text-anchor="middle" class="ax">45</text><line x1="122.44" y1="233.7" x2="122.44" y2="237.7" stroke="#555" stroke-width="1"/><text x="122.44" y="246.10" text-anchor="middle" class="ax">67</text><line x1="143.42" y1="233.7" x2="143.42" y2="237.7" stroke="#555" stroke-width="1"/><text x="143.42" y="246.10" text-anchor="middle" class="ax">89</text><line x1="164.40" y1="233.7" x2="164.40" y2="237.7" stroke="#555" stroke-width="1"/><text x="164.40" y="246.10" text-anchor="middle" class="ax">111</text><line x1="185.38" y1="233.7" x2="185.38" y2="237.7" stroke="#555" stroke-width="1"/><text x="185.38" y="246.10" text-anchor="middle" class="ax">133</text><line x1="206.36" y1="233.7" x2="206.36" y2="237.7" stroke="#555" stroke-width="1"/><text x="206.36" y="246.10" text-anchor="middle" class="ax">155</text><line x1="227.34" y1="233.7" x2="227.34" y2="237.7" stroke="#555" stroke-width="1"/><text x="227.34" y="246.10" text-anchor="middle" class="ax">177</text><line x1="248.32" y1="233.7" x2="248.32" y2="237.7" stroke="#555" stroke-width="1"/><text x="248.32" y="246.10" text-anchor="middle" class="ax">199</text><line x1="269.30" y1="233.7" x2="269.30" y2="237.7" stroke="#555" stroke-width="1"/><text x="269.30" y="246.10" text-anchor="middle" class="ax">221</text><line x1="282.5" y1="233.7" x2="282.5" y2="237.7" stroke="#555" stroke-width="1"/><text x="293.5" y="236.30" class="ax">step</text><path d="M59.50 130.80 L60.46 224.81 L61.41 225.19 L62.37 224.72 L63.33 224.76 L64.29 224.95 L65.24 225.18 L66.20 224.58 L67.16 225.10 L68.11 224.70 L69.07 225.16 L70.03 225.17 L70.98 224.75 L71.94 225.11 L72.90 224.59 L73.86 224.95 L74.81 225.20 L75.77 225.17 L76.73 225.02 L77.68 224.82 L78.64 224.60 L79.60 225.23 L80.56 225.03 L81.51 225.18 L82.47 224.58 L83.43 225.23 L84.38 225.30 L85.34 225.30 L86.30 225.03 L87.26 224.64 L88.21 224.65 L89.17 224.77 L90.13 224.56 L91.08 224.61 L92.04 225.08 L93.00 225.20 L93.95 224.61 L94.91 224.76 L95.87 225.32 L96.83 224.82 L97.78 225.05 L98.74 225.05 L99.70 225.08 L100.65 225.21 L101.61 225.34 L102.57 225.12 L103.53 225.07 L104.48 224.59 L105.44 225.25 L106.40 224.58 L107.35 225.18 L108.31 225.06 L109.27 224.70 L110.23 224.70 L111.18 225.00 L112.14 225.30 L113.10 224.97 L114.05 225.05 L115.01 224.62 L115.97 225.19 L116.92 225.06 L117.88 224.64 L118.84 225.32 L119.80 225.02 L120.75 224.70 L121.71 224.74 L122.67 225.31 L123.62 225.32 L124.58 225.29 L125.54 224.62 L126.50 225.14 L127.45 224.76 L128.41 224.64 L129.37 225.08 L130.32 225.13 L131.28 224.59 L132.24 224.86 L133.20 225.14 L134.15 224.78 L135.11 225.09 L136.07 225.13 L137.02 225.34 L137.98 224.75 L138.94 224.62 L139.89 224.84 L140.85 224.60 L141.81 225.32 L142.77 225.16 L143.72 224.97 L144.68 224.59 L145.64 224.59 L146.59 225.04 L147.55 225.15 L148.51 225.01 L149.47 224.96 L150.42 224.61 L151.38 225.20 L152.34 224.71 L153.29 224.76 L154.25 224.70 L155.21 224.74 L156.17 224.87 L157.12 225.09 L158.08 225.09 L159.04 225.06 L159.99 224.73 L160.95 225.28 L161.91 225.19 L162.86 224.75 L163.82 225.15 L164.78 225.29 L165.74 225.32 L166.69 224.91 L167.65 225.09 L168.61 224.57 L169.56 224.65 L170.52 224.57 L171.48 225.13 L172.44 225.28 L173.39 225.27 L174.35 224.95 L175.31 224.79 L176.26 224.99 L177.22 225.16 L178.18 225.02 L179.14 224.86 L180.09 224.81 L181.05 224.75 L182.01 224.68 L182.96 224.82 L183.92 225.25 L184.88 224.68 L185.83 225.11 L186.79 224.90 L187.75 225.05 L188.71 224.76 L189.66 225.19 L190.62 225.15 L191.58 225.15 L192.53 225.22 L193.49 224.65 L194.45 224.89 L195.41 225.09 L196.36 225.03 L197.32 224.56 L198.28 224.94 L199.23 225.16 L200.19 224.71 L201.15 224.83 L202.11 224.56 L203.06 225.26 L204.02 224.97 L204.98 224.70 L205.93 224.68 L206.89 224.62 L207.85 225.31 L208.80 225.11 L209.76 225.25 L210.72 225.19 L211.68 224.58 L212.63 224.88 L213.59 224.61 L214.55 225.05 L215.50 224.66 L216.46 224.99 L217.42 225.14 L218.38 224.73 L219.33 224.60 L220.29 225.26 L221.25 224.87 L222.20 224.86 L223.16 225.17 L224.12 225.05 L225.08 225.23 L226.03 225.18 L226.99 225.14 L227.95 224.87 L228.90 224.83 L229.86 225.18 L230.82 225.33 L231.77 225.09 L232.73 224.81 L233.69 225.20 L234.65 225.10 L235.60 225.18 L236.56 224.72 L237.52 224.91 L238.47 225.29 L239.43 225.26 L240.39 225.03 L241.35 224.91 L242.30 224.84 L243.26 225.27 L244.22 225.21 L245.17 224.80 L246.13 225.02 L247.09 225.12 L248.05 225.10 L249.00 224.59 L249.96 225.10 L250.92 224.90 L251.87 225.06 L252.83 225.02 L253.79 224.66 L254.74 224.56 L255.70 225.06 L256.66 225.19 L257.62 224.77 L258.57 225.18 L259.53 225.34 L260.49 224.63 L261.44 225.01 L262.40 224.70 L263.36 225.02 L264.32 224.65 L265.27 224.98 L266.23 225.22 L267.19 225.33 L268.14 224.91 L269.10 224.84 L270.06 224.63 L271.02 225.27 L271.97 224.85 L272.93 225.05 L273.89 224.95 L274.84 225.23 L275.80 225.12 L276.76 224.93 L277.71 224.62 L278.67 225.26 L279.63 224.96 L280.59 224.71 L281.54 224.58 L282.50 225.19" fill="none" stroke="#c23531" stroke-width="1.45" stroke-linejoin="round"/><circle cx="59.50" cy="130.80" r="1.6" fill="#fff" stroke="#c23531" stroke-width="0.9"/><circle cx="80.56" cy="225.03" r="1.6" fill="#fff" stroke="#c23531" stroke-width="0.9"/><circle cx="101.61" cy="225.34" r="1.6" fill="#fff" stroke="#c23531" stroke-width="0.9"/><circle cx="122.67" cy="225.31" r="1.6" fill="#fff" stroke="#c23531" stroke-width="0.9"/><circle cx="143.72" cy="224.97" r="1.6" fill="#fff" stroke="#c23531" stroke-width="0.9"/><circle cx="164.78" cy="225.29" r="1.6" fill="#fff" stroke="#c23531" stroke-width="0.9"/><circle cx="185.83" cy="225.11" r="1.6" fill="#fff" stroke="#c23531" stroke-width="0.9"/><circle cx="206.89" cy="224.62" r="1.6" fill="#fff" stroke="#c23531" stroke-width="0.9"/><circle cx="227.95" cy="224.87" r="1.6" fill="#fff" stroke="#c23531" stroke-width="0.9"/><circle cx="249.00" cy="224.59" r="1.6" fill="#fff" stroke="#c23531" stroke-width="0.9"/><circle cx="270.06" cy="224.63" r="1.6" fill="#fff" stroke="#c23531" stroke-width="0.9"/><rect x="61.4" y="248.3" width="222.9" height="20.5" fill="#dce2eb"/><path d="M61.40 268.80 L61.40 252.14 L62.36 264.88 L63.31 264.94 L64.27 264.87 L65.23 264.88 L66.18 264.90 L67.14 264.93 L68.10 264.85 L69.05 264.92 L70.01 264.87 L70.97 264.93 L71.92 264.93 L72.88 264.88 L73.84 264.93 L74.79 264.86 L75.75 264.90 L76.71 264.94 L77.66 264.93 L78.62 264.91 L79.58 264.89 L80.53 264.86 L81.49 264.94 L82.45 264.91 L83.40 264.93 L84.36 264.85 L85.32 264.94 L86.27 264.95 L87.23 264.95 L88.19 264.91 L89.14 264.86 L90.10 264.86 L91.06 264.88 L92.01 264.85 L92.97 264.86 L93.93 264.92 L94.88 264.94 L95.84 264.86 L96.80 264.88 L97.75 264.95 L98.71 264.89 L99.67 264.92 L100.62 264.92 L101.58 264.92 L102.54 264.94 L103.49 264.96 L104.45 264.93 L105.41 264.92 L106.36 264.85 L107.32 264.94 L108.28 264.85 L109.23 264.93 L110.19 264.92 L111.15 264.87 L112.10 264.87 L113.06 264.91 L114.02 264.95 L114.97 264.91 L115.93 264.92 L116.89 264.86 L117.84 264.94 L118.80 264.92 L119.76 264.86 L120.71 264.95 L121.67 264.91 L122.63 264.87 L123.58 264.87 L124.54 264.95 L125.50 264.95 L126.45 264.95 L127.41 264.86 L128.37 264.93 L129.32 264.88 L130.28 264.86 L131.24 264.92 L132.19 264.93 L133.15 264.85 L134.11 264.89 L135.06 264.93 L136.02 264.88 L136.98 264.92 L137.93 264.93 L138.89 264.96 L139.85 264.88 L140.80 264.86 L141.76 264.89 L142.72 264.86 L143.67 264.95 L144.63 264.93 L145.59 264.91 L146.54 264.85 L147.50 264.85 L148.46 264.92 L149.41 264.93 L150.37 264.91 L151.33 264.90 L152.28 264.86 L153.24 264.94 L154.20 264.87 L155.15 264.88 L156.11 264.87 L157.07 264.87 L158.02 264.89 L158.98 264.92 L159.94 264.92 L160.89 264.92 L161.85 264.87 L162.81 264.95 L163.76 264.94 L164.72 264.88 L165.68 264.93 L166.63 264.95 L167.59 264.95 L168.55 264.90 L169.50 264.92 L170.46 264.85 L171.42 264.86 L172.37 264.85 L173.33 264.93 L174.28 264.95 L175.24 264.95 L176.20 264.90 L177.15 264.88 L178.11 264.91 L179.07 264.93 L180.02 264.91 L180.98 264.89 L181.94 264.88 L182.89 264.88 L183.85 264.87 L184.81 264.89 L185.76 264.94 L186.72 264.87 L187.68 264.93 L188.63 264.90 L189.59 264.92 L190.55 264.88 L191.50 264.94 L192.46 264.93 L193.42 264.93 L194.37 264.94 L195.33 264.86 L196.29 264.89 L197.24 264.92 L198.20 264.91 L199.16 264.85 L200.11 264.90 L201.07 264.93 L202.03 264.87 L202.98 264.89 L203.94 264.85 L204.90 264.95 L205.85 264.91 L206.81 264.87 L207.77 264.87 L208.72 264.86 L209.68 264.95 L210.64 264.93 L211.59 264.94 L212.55 264.94 L213.51 264.85 L214.46 264.89 L215.42 264.86 L216.38 264.92 L217.33 264.86 L218.29 264.91 L219.25 264.93 L220.20 264.87 L221.16 264.86 L222.12 264.95 L223.07 264.89 L224.03 264.89 L224.99 264.93 L225.94 264.92 L226.90 264.94 L227.86 264.93 L228.81 264.93 L229.77 264.89 L230.73 264.89 L231.68 264.93 L232.64 264.96 L233.60 264.92 L234.55 264.88 L235.51 264.94 L236.47 264.92 L237.42 264.93 L238.38 264.87 L239.34 264.90 L240.29 264.95 L241.25 264.95 L242.21 264.91 L243.16 264.90 L244.12 264.89 L245.08 264.95 L246.03 264.94 L246.99 264.88 L247.95 264.91 L248.90 264.93 L249.86 264.92 L250.82 264.85 L251.77 264.92 L252.73 264.90 L253.69 264.92 L254.64 264.91 L255.60 264.86 L256.56 264.85 L257.51 264.92 L258.47 264.94 L259.43 264.88 L260.38 264.93 L261.34 264.96 L262.30 264.86 L263.25 264.91 L264.21 264.87 L265.17 264.91 L266.12 264.86 L267.08 264.91 L268.04 264.94 L268.99 264.95 L269.95 264.90 L270.91 264.89 L271.86 264.86 L272.82 264.95 L273.78 264.89 L274.73 264.92 L275.69 264.90 L276.65 264.94 L277.60 264.93 L278.56 264.90 L279.52 264.86 L280.47 264.94 L281.43 264.90 L282.39 264.87 L283.34 264.85 L284.30 264.94 L284.30 268.80Z" fill="#d0d8e2"/><path d="M61.40 252.14 L62.36 264.88 L63.31 264.94 L64.27 264.87 L65.23 264.88 L66.18 264.90 L67.14 264.93 L68.10 264.85 L69.05 264.92 L70.01 264.87 L70.97 264.93 L71.92 264.93 L72.88 264.88 L73.84 264.93 L74.79 264.86 L75.75 264.90 L76.71 264.94 L77.66 264.93 L78.62 264.91 L79.58 264.89 L80.53 264.86 L81.49 264.94 L82.45 264.91 L83.40 264.93 L84.36 264.85 L85.32 264.94 L86.27 264.95 L87.23 264.95 L88.19 264.91 L89.14 264.86 L90.10 264.86 L91.06 264.88 L92.01 264.85 L92.97 264.86 L93.93 264.92 L94.88 264.94 L95.84 264.86 L96.80 264.88 L97.75 264.95 L98.71 264.89 L99.67 264.92 L100.62 264.92 L101.58 264.92 L102.54 264.94 L103.49 264.96 L104.45 264.93 L105.41 264.92 L106.36 264.85 L107.32 264.94 L108.28 264.85 L109.23 264.93 L110.19 264.92 L111.15 264.87 L112.10 264.87 L113.06 264.91 L114.02 264.95 L114.97 264.91 L115.93 264.92 L116.89 264.86 L117.84 264.94 L118.80 264.92 L119.76 264.86 L120.71 264.95 L121.67 264.91 L122.63 264.87 L123.58 264.87 L124.54 264.95 L125.50 264.95 L126.45 264.95 L127.41 264.86 L128.37 264.93 L129.32 264.88 L130.28 264.86 L131.24 264.92 L132.19 264.93 L133.15 264.85 L134.11 264.89 L135.06 264.93 L136.02 264.88 L136.98 264.92 L137.93 264.93 L138.89 264.96 L139.85 264.88 L140.80 264.86 L141.76 264.89 L142.72 264.86 L143.67 264.95 L144.63 264.93 L145.59 264.91 L146.54 264.85 L147.50 264.85 L148.46 264.92 L149.41 264.93 L150.37 264.91 L151.33 264.90 L152.28 264.86 L153.24 264.94 L154.20 264.87 L155.15 264.88 L156.11 264.87 L157.07 264.87 L158.02 264.89 L158.98 264.92 L159.94 264.92 L160.89 264.92 L161.85 264.87 L162.81 264.95 L163.76 264.94 L164.72 264.88 L165.68 264.93 L166.63 264.95 L167.59 264.95 L168.55 264.90 L169.50 264.92 L170.46 264.85 L171.42 264.86 L172.37 264.85 L173.33 264.93 L174.28 264.95 L175.24 264.95 L176.20 264.90 L177.15 264.88 L178.11 264.91 L179.07 264.93 L180.02 264.91 L180.98 264.89 L181.94 264.88 L182.89 264.88 L183.85 264.87 L184.81 264.89 L185.76 264.94 L186.72 264.87 L187.68 264.93 L188.63 264.90 L189.59 264.92 L190.55 264.88 L191.50 264.94 L192.46 264.93 L193.42 264.93 L194.37 264.94 L195.33 264.86 L196.29 264.89 L197.24 264.92 L198.20 264.91 L199.16 264.85 L200.11 264.90 L201.07 264.93 L202.03 264.87 L202.98 264.89 L203.94 264.85 L204.90 264.95 L205.85 264.91 L206.81 264.87 L207.77 264.87 L208.72 264.86 L209.68 264.95 L210.64 264.93 L211.59 264.94 L212.55 264.94 L213.51 264.85 L214.46 264.89 L215.42 264.86 L216.38 264.92 L217.33 264.86 L218.29 264.91 L219.25 264.93 L220.20 264.87 L221.16 264.86 L222.12 264.95 L223.07 264.89 L224.03 264.89 L224.99 264.93 L225.94 264.92 L226.90 264.94 L227.86 264.93 L228.81 264.93 L229.77 264.89 L230.73 264.89 L231.68 264.93 L232.64 264.96 L233.60 264.92 L234.55 264.88 L235.51 264.94 L236.47 264.92 L237.42 264.93 L238.38 264.87 L239.34 264.90 L240.29 264.95 L241.25 264.95 L242.21 264.91 L243.16 264.90 L244.12 264.89 L245.08 264.95 L246.03 264.94 L246.99 264.88 L247.95 264.91 L248.90 264.93 L249.86 264.92 L250.82 264.85 L251.77 264.92 L252.73 264.90 L253.69 264.92 L254.64 264.91 L255.60 264.86 L256.56 264.85 L257.51 264.92 L258.47 264.94 L259.43 264.88 L260.38 264.93 L261.34 264.96 L262.30 264.86 L263.25 264.91 L264.21 264.87 L265.17 264.91 L266.12 264.86 L267.08 264.91 L268.04 264.94 L268.99 264.95 L269.95 264.90 L270.91 264.89 L271.86 264.86 L272.82 264.95 L273.78 264.89 L274.73 264.92 L275.69 264.90 L276.65 264.94 L277.60 264.93 L278.56 264.90 L279.52 264.86 L280.47 264.94 L281.43 264.90 L282.39 264.87 L283.34 264.85 L284.30 264.94" fill="none" stroke="#c3ccd9" stroke-width="0.5"/><line x1="61.4" y1="248.3" x2="61.4" y2="268.8" stroke="#a7b7cc" stroke-width="1.2"/><rect x="58.6" y="254.5" width="5.6" height="9.3" rx="0.8" fill="#a7b7cc"/><line x1="59.9" y1="257.90000000000003" x2="62.9" y2="257.90000000000003" stroke="#e4e9f0" stroke-width="0.8"/><line x1="59.9" y1="260.7" x2="62.9" y2="260.7" stroke="#e4e9f0" stroke-width="0.8"/><line x1="284.3" y1="248.3" x2="284.3" y2="268.8" stroke="#a7b7cc" stroke-width="1.2"/><rect x="281.5" y="254.5" width="5.6" height="9.3" rx="0.8" fill="#a7b7cc"/><line x1="282.8" y1="257.90000000000003" x2="285.8" y2="257.90000000000003" stroke="#e4e9f0" stroke-width="0.8"/><line x1="282.8" y1="260.7" x2="285.8" y2="260.7" stroke="#e4e9f0" stroke-width="0.8"/></svg>
</div>
</body>
</html>
